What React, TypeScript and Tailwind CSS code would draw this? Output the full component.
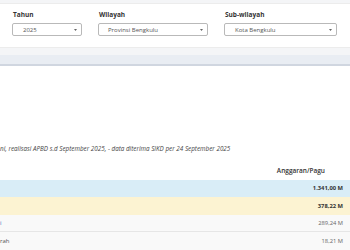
import React from "react";

function Caret() {
  return (
    <svg width="3" height="2" viewBox="0 0 3 2" className="shrink-0">
      <path d="M0 0 L3 0 L1.5 2 Z" fill="#666" />
    </svg>
  );
}

function Field({ label, value, w, pl }: { label: string; value: string; w: string; pl: string }) {
  return (
    <div className={`flex flex-col ${w}`}>
      <div className="text-[6.5px] leading-[8px] font-bold text-[#333] pl-px">{label}</div>
      <div className={`mt-[4px] h-[13px] border border-[#b9b9b9] rounded-[2px] bg-white flex items-center justify-between ${pl} pr-[4px]`}>
        <span className="text-[6px] text-[#555] leading-none">{value}</span>
        <Caret />
      </div>
    </div>
  );
}

function Row({ bg, h, label, labelColor, value, bold, border }: { bg: string; h: string; label: string; labelColor: string; value: string; bold?: boolean; border?: boolean }) {
  return (
    <div className={`flex items-center justify-between ${bg} ${h} ${border ? "border-b border-[#e6e6e6]" : ""}`}>
      <span className={`text-[6px] whitespace-nowrap ${labelColor}`}>{label}</span>
      <span className={`text-[5.8px] pr-[7px] ${bold ? "font-bold text-[#333]" : "text-[#666]"}`}>{value}</span>
    </div>
  );
}

export default function App() {
  return (
    <div className="w-[350px] h-[250px] overflow-hidden bg-white font-['Open_Sans',sans-serif]">
      <div className="bg-[#f4f5f7] pt-[3px] pb-[7px]">
        <div className="bg-white h-[45px] border-y border-[#ececec] flex gap-[16px] pl-[12px] pt-[7px]">
          <Field label="Tahun" value="2025" w="w-[70px]" pl="pl-[10px]" />
          <Field label="Wilayah" value="Provinsi Bengkulu" w="w-[110px]" pl="pl-[9px]" />
          <Field label="Sub-wilayah" value="Kota Bengkulu" w="w-[113px]" pl="pl-[10px]" />
        </div>
      </div>
      <div className="h-[11px] bg-[#e9edf3] border-b-2 border-[#d0d6e0]" />
      <div className="mt-[79px] h-[8px] flex items-center">
        <span className="text-[6.3px] italic text-[#444] whitespace-nowrap leading-none">
          ni, realisasi APBD s.d September 2025, - data diterima SIKD per 24 September 2025
        </span>
      </div>
      <div className="mt-[9px] h-[18px] flex items-center justify-end pr-[25px]">
        <span className="text-[6.5px] font-semibold text-[#333]">Anggaran/Pagu</span>
      </div>
      <Row bg="bg-[#d9edf7]" h="h-[17px]" label="" labelColor="text-[#333]" value="1.341,00 M" bold />
      <Row bg="bg-[#fcf3d2]" h="h-[18px]" label="" labelColor="text-[#333]" value="378,22 M" bold />
      <Row bg="bg-[#f9f9f9]" h="h-[17px]" label="i" labelColor="text-[#3a6fc4]" value="289,24 M" border />
      <Row bg="bg-[#f9f9f9]" h="h-[18px]" label="rah" labelColor="text-[#555]" value="18,21 M" />
    </div>
  );
}
